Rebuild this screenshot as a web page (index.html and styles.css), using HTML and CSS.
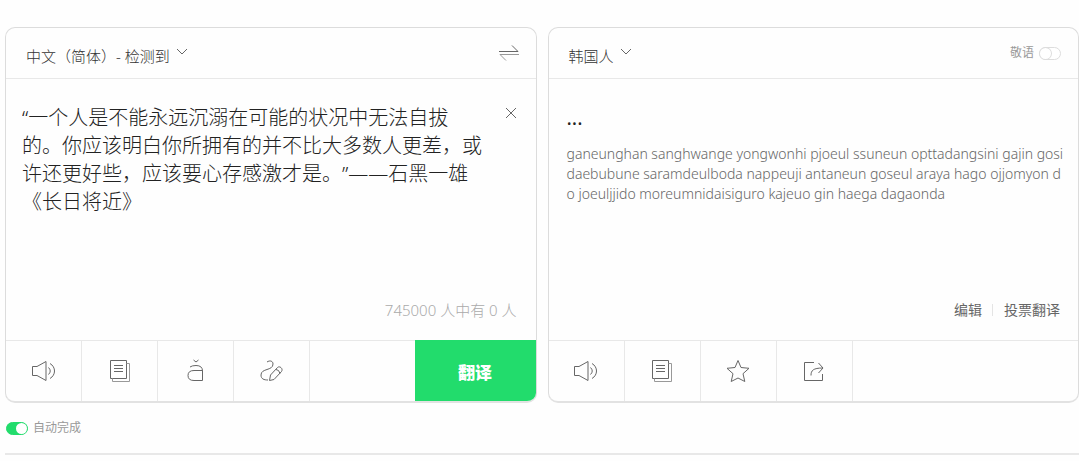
FILE: index.html
```html
<!DOCTYPE html>
<html lang="zh-CN">
<head>
  <meta charset="UTF-8">
  <title>翻译</title>
  <meta name="viewport" content="width=device-width, initial-scale=1.0">
  <link rel="stylesheet" href="styles.css">
</head>
<body>
  <main class="translator">
    <!-- Source -->
    <section class="panel">
      <div class="panel-header">
        <button class="lang-btn">中文（简体）- 检测到
          <svg width="12" height="8" viewBox="0 0 12 8"><path d="M1 1l5 5 5-5"/></svg>
        </button>
        <button class="icon-btn" aria-label="交换语言">
          <svg width="20" height="18" viewBox="0 0 20 18"><path d="M0 7.5h19l-6-6"/><path class="pale" d="M20 10.5H1l6 6"/></svg>
        </button>
      </div>
      <div class="panel-body">
        <div class="source-row">
          <textarea class="source-text" rows="4" aria-label="原文" spellcheck="false">“一个人是不能永远沉溺在可能的状况中无法自拔的。你应该明白你所拥有的并不比大多数人更差，或许还更好些，应该要心存感激才是。”——石黑一雄《长日将近》</textarea>
          <button class="icon-btn clear-btn" aria-label="清除">
            <svg width="12" height="12" viewBox="0 0 12 12"><path d="M1 1l10 10M11 1L1 11"/></svg>
          </button>
        </div>
        <p class="counter">745000 人中有 0 人</p>
      </div>
      <div class="toolbar">
        <button class="tool" aria-label="朗读">
          <svg width="24" height="22" viewBox="0 0 24 22"><path d="M.5 6.5H5l9-5v19l-9-5H.5z"/><path d="M16.5 7.5q3.5 3.5 0 7M18 3.5c6 3.5 6 11.5 0 15"/></svg>
        </button>
        <button class="tool" aria-label="词典">
          <svg width="22" height="22" viewBox="0 0 22 22"><path d="M1.5.5h16v18h-16zM5 5.5h9M5 8.5h9M5 11.5h9"/><path class="pale" d="M17.5 3.5h3v18h-17v-3"/></svg>
        </button>
        <button class="tool" aria-label="发音">
          <svg width="18" height="24" viewBox="0 0 18 24"><path d="M6.5 1l2.5 2 2.500-2M3 8q2-1.500 6-1.500 6.500 0 6.500 5.500v9.500M15.500 11.500H7q-6 0-6 5t6 5h8.500"/></svg>
        </button>
        <button class="tool" aria-label="手写">
          <svg width="26" height="22" viewBox="0 0 26 22"><path d="M8 2c3-2 6-1 6 2 0 7-12 4-12 11 0 4 3 5 7 5M10.500 20.500l1-5.500 7-7.500c2-2 6 1 4 4l-7.500 8zM17 9.500q3 0 4 4"/></svg>
        </button>
        <button class="translate-btn">翻译</button>
      </div>
    </section>

    <!-- Result -->
    <section class="panel">
      <div class="panel-header">
        <button class="lang-btn">韩国人
          <svg width="12" height="8" viewBox="0 0 12 8"><path d="M1 1l5 5 5-5"/></svg>
        </button>
        <label class="switch-label">敬语 <input type="checkbox" class="switch"></label>
      </div>
      <div class="panel-body">
        <div class="result">
          <p class="result-text">...</p>
          <p class="romanized">ganeunghan sanghwange yongwonhi pjoeul ssuneun opttadangsini gajin gosidaebubune saramdeulboda nappeuji antaneun goseul araya hago ojjomyon do joeuljjido moreumnidaisiguro kajeuo gin haega dagaonda</p>
        </div>
        <div class="links">
          <a href="#">编辑</a>
          <a href="#">投票翻译</a>
        </div>
      </div>
      <div class="toolbar">
        <button class="tool" aria-label="朗读">
          <svg width="24" height="22" viewBox="0 0 24 22"><path d="M.5 6.5H5l9-5v19l-9-5H.5z"/><path d="M16.5 7.5q3.5 3.5 0 7M18 3.5c6 3.5 6 11.5 0 15"/></svg>
        </button>
        <button class="tool" aria-label="词典">
          <svg width="22" height="22" viewBox="0 0 22 22"><path d="M1.5.5h16v18h-16zM5 5.5h9M5 8.5h9M5 11.5h9"/><path class="pale" d="M17.5 3.5h3v18h-17v-3"/></svg>
        </button>
        <button class="tool" aria-label="收藏">
          <svg width="24" height="24" viewBox="0 0 24 24"><path d="M12 1.500l3 7 8 .8-6 5.400 1.800 7.800-6.800-3.500-6.800 3.500L7 14.700 1 9.300l8-.8z"/></svg>
        </button>
        <button class="tool" aria-label="分享">
          <svg width="22" height="22" viewBox="0 0 22 22"><path d="M11 2.500H1.500v18h18V14M8 15.500c0-5 2-7.500 12-7.500M15.500 3L20 8l-4.500 5"/></svg>
        </button>
      </div>
    </section>
  </main>

  <footer class="footer">
    <label class="switch-label"><input type="checkbox" class="switch" checked> 自动完成</label>
  </footer>
</body>
</html>
```
FILE: styles.css
```css
* {
  box-sizing: border-box;
}

body {
  margin: 0;
  padding: 27px 0 0 5px;
  background: #fefefe;
  color: #333;
  font-family: "Noto Sans", "Noto Sans CJK SC", sans-serif;
}

p {
  margin: 0;
}

button {
  padding: 0;
  border: none;
  background: none;
  color: inherit;
  font-family: inherit;
  cursor: pointer;
}

svg {
  display: block;
  fill: none;
  stroke: #666;
  stroke-width: 1;
}

.pale {
  stroke: #999;
}

.translator {
  display: grid;
  grid-template-columns: 1fr 1fr;
  gap: 11px;
}

.panel {
  display: flex;
  flex-direction: column;
  border: 1px solid #dcdcdc;
  border-bottom: 2px solid #e2e2e2;
  border-radius: 10px;
  overflow: hidden;
}

.panel-header {
  display: flex;
  align-items: center;
  justify-content: space-between;
  height: 51px;
  padding: 0 17px 0 20px;
  border-bottom: 1px solid #e8e8e8;
}

.lang-btn {
  display: flex;
  gap: 6px;
  padding-top: 6px;
  font-size: 15px;
  font-weight: 300;
  line-height: 22px;
}

.lang-btn svg {
  margin-top: 3px;
}

.panel-body {
  display: flex;
  flex-direction: column;
  justify-content: space-between;
  min-height: 261px;
  padding: 25px 13px 18px 16px;
}

.source-row {
  display: flex;
  align-items: flex-start;
  justify-content: space-between;
}

.source-text {
  width: 465px;
  padding: 0;
  border: none;
  outline: none;
  resize: none;
  overflow: hidden;
  background: none;
  color: #222;
  font-family: inherit;
  font-size: 20px;
  font-weight: 300;
  line-height: 28px;
  text-spacing-trim: space-all;
}

.clear-btn {
  padding: 3px 6px;
}

.counter {
  padding-right: 6px;
  color: #aaa;
  font-size: 15px;
  font-weight: 300;
  line-height: 24px;
  text-align: right;
}

.result {
  padding-left: 2px;
}

.result-text {
  margin-bottom: 12px;
  color: #222;
  font-size: 20px;
  line-height: 28px;
}

.romanized {
  color: #666;
  font-size: 14px;
  font-weight: 300;
  line-height: 20px;
  word-break: break-all;
}

.links {
  display: flex;
  justify-content: flex-end;
  padding-right: 5px;
  font-size: 14px;
  line-height: 24px;
}

.links a {
  color: #666;
  text-decoration: none;
}

.links a + a {
  margin-left: 10px;
  padding-left: 12px;
  background: linear-gradient(#e4e4e4, #e4e4e4) left center / 1px 12px no-repeat;
}

.toolbar {
  display: flex;
  height: 61px;
  border-top: 1px solid #e8e8e8;
}

.tool {
  display: flex;
  align-items: center;
  justify-content: center;
  width: 76px;
  border-right: 1px solid #e8e8e8;
}

.translate-btn {
  width: 121px;
  margin: -1px 0 -2px auto;
  background: #22dc6c;
  color: #fff;
  font-size: 17px;
  font-weight: 900;
}

.switch-label {
  display: flex;
  align-items: center;
  gap: 5px;
  color: #999;
  font-size: 12px;
  line-height: 18px;
}

.switch {
  appearance: none;
  display: flex;
  width: 22px;
  height: 13px;
  margin: 0;
  border: 1px solid #ddd;
  border-radius: 7px;
  background: #fff;
  cursor: pointer;
}

.switch::before {
  content: "";
  width: 11px;
  height: 11px;
  border-radius: 50%;
  background: #fff;
  box-shadow: 0 0 0 1px #ddd;
}

.switch:checked {
  justify-content: flex-end;
  border-color: #22dc6c;
  background: #22dc6c;
}

.switch:checked::before {
  box-shadow: none;
}

.footer {
  padding: 16px 0 16px 1px;
  border-bottom: 2px solid #e8e8e8;
}
```
